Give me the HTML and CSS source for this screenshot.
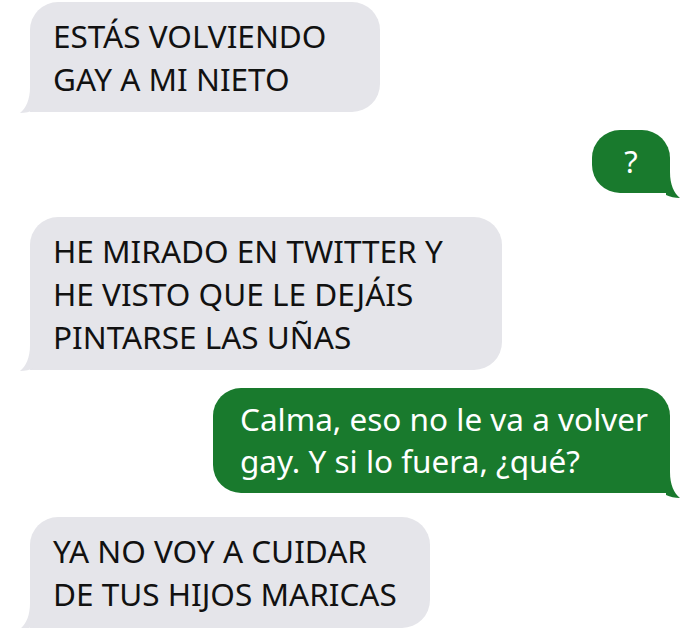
FILE: index.html
```html
<!DOCTYPE html>
<html lang="es">
<head>
<meta charset="utf-8">
<link rel="stylesheet" href="styles.css">
</head>
<body>
<main class="chat">
  <div class="msg in m1">
    <p>ESTÁS VOLVIENDO<br>GAY A MI NIETO</p>
    <svg class="tail" viewBox="0 0 14 26" aria-hidden="true"><path d="M10 0 C10 13 6 21 0 26 C5 26 10 25 14 23 L14 0 Z"/></svg>
  </div>
  <div class="msg out m2">
    <p>?</p>
    <svg class="tail" viewBox="0 0 14 26" aria-hidden="true"><path d="M10 0 C10 13 6 21 0 26 C5 26 10 25 14 23 L14 0 Z"/></svg>
  </div>
  <div class="msg in m3">
    <p>HE MIRADO EN TWITTER Y<br>HE VISTO QUE LE DEJÁIS<br>PINTARSE LAS UÑAS</p>
    <svg class="tail" viewBox="0 0 14 26" aria-hidden="true"><path d="M10 0 C10 13 6 21 0 26 C5 26 10 25 14 23 L14 0 Z"/></svg>
  </div>
  <div class="msg out m4">
    <p>Calma, eso no le va a volver<br>gay. Y si lo fuera, ¿qué?</p>
    <svg class="tail" viewBox="0 0 14 26" aria-hidden="true"><path d="M10 0 C10 13 6 21 0 26 C5 26 10 25 14 23 L14 0 Z"/></svg>
  </div>
  <div class="msg in m5">
    <p>YA NO VOY A CUIDAR<br>DE TUS HIJOS MARICAS</p>
    <svg class="tail" viewBox="0 0 14 26" aria-hidden="true"><path d="M10 0 C10 13 6 21 0 26 C5 26 10 25 14 23 L14 0 Z"/></svg>
  </div>
</main>
</body>
</html>
```

FILE: styles.css
```css
html, body {
  margin: 0;
  background: #ffffff;
}

.chat {
  display: flex;
  flex-direction: column;
  padding: 2px 30px 0 30px;
  font-family: "Noto Sans", "Open Sans", sans-serif;
}

.msg {
  position: relative;
  box-sizing: border-box;
  border-radius: 28px;
  font-size: 31.5px;
  line-height: 43px;
}

.msg p {
  margin: 0;
  white-space: nowrap;
}

.tail {
  position: absolute;
  bottom: -1px;
  width: 14px;
  height: 26px;
}

.in {
  align-self: flex-start;
  background: #e5e5ea;
  color: #111111;
  border-bottom-left-radius: 0;
  padding: 12px 23px;
}

.in .tail {
  left: -10px;
  fill: #e5e5ea;
}

.out {
  align-self: flex-end;
  background: #197a2d;
  color: #ffffff;
  border-bottom-right-radius: 0;
}

.out .tail {
  right: -10px;
  bottom: -5px;
  transform: scaleX(-1);
  fill: #197a2d;
}

.m1 { width: 350px; }

.m2 {
  width: 78px;
  margin-top: 18px;
  padding: 10px 0;
  text-align: center;
  font-size: 31px;
}

.m3 { width: 472px; margin-top: 24px; }

.m4 {
  width: 457px;
  margin-top: 18px;
  padding: 10px 18px 11px 27px;
  line-height: 42px;
  font-size: 31.5px;
}

.m5 { width: 400px; margin-top: 24px; padding-bottom: 13px; }
```
